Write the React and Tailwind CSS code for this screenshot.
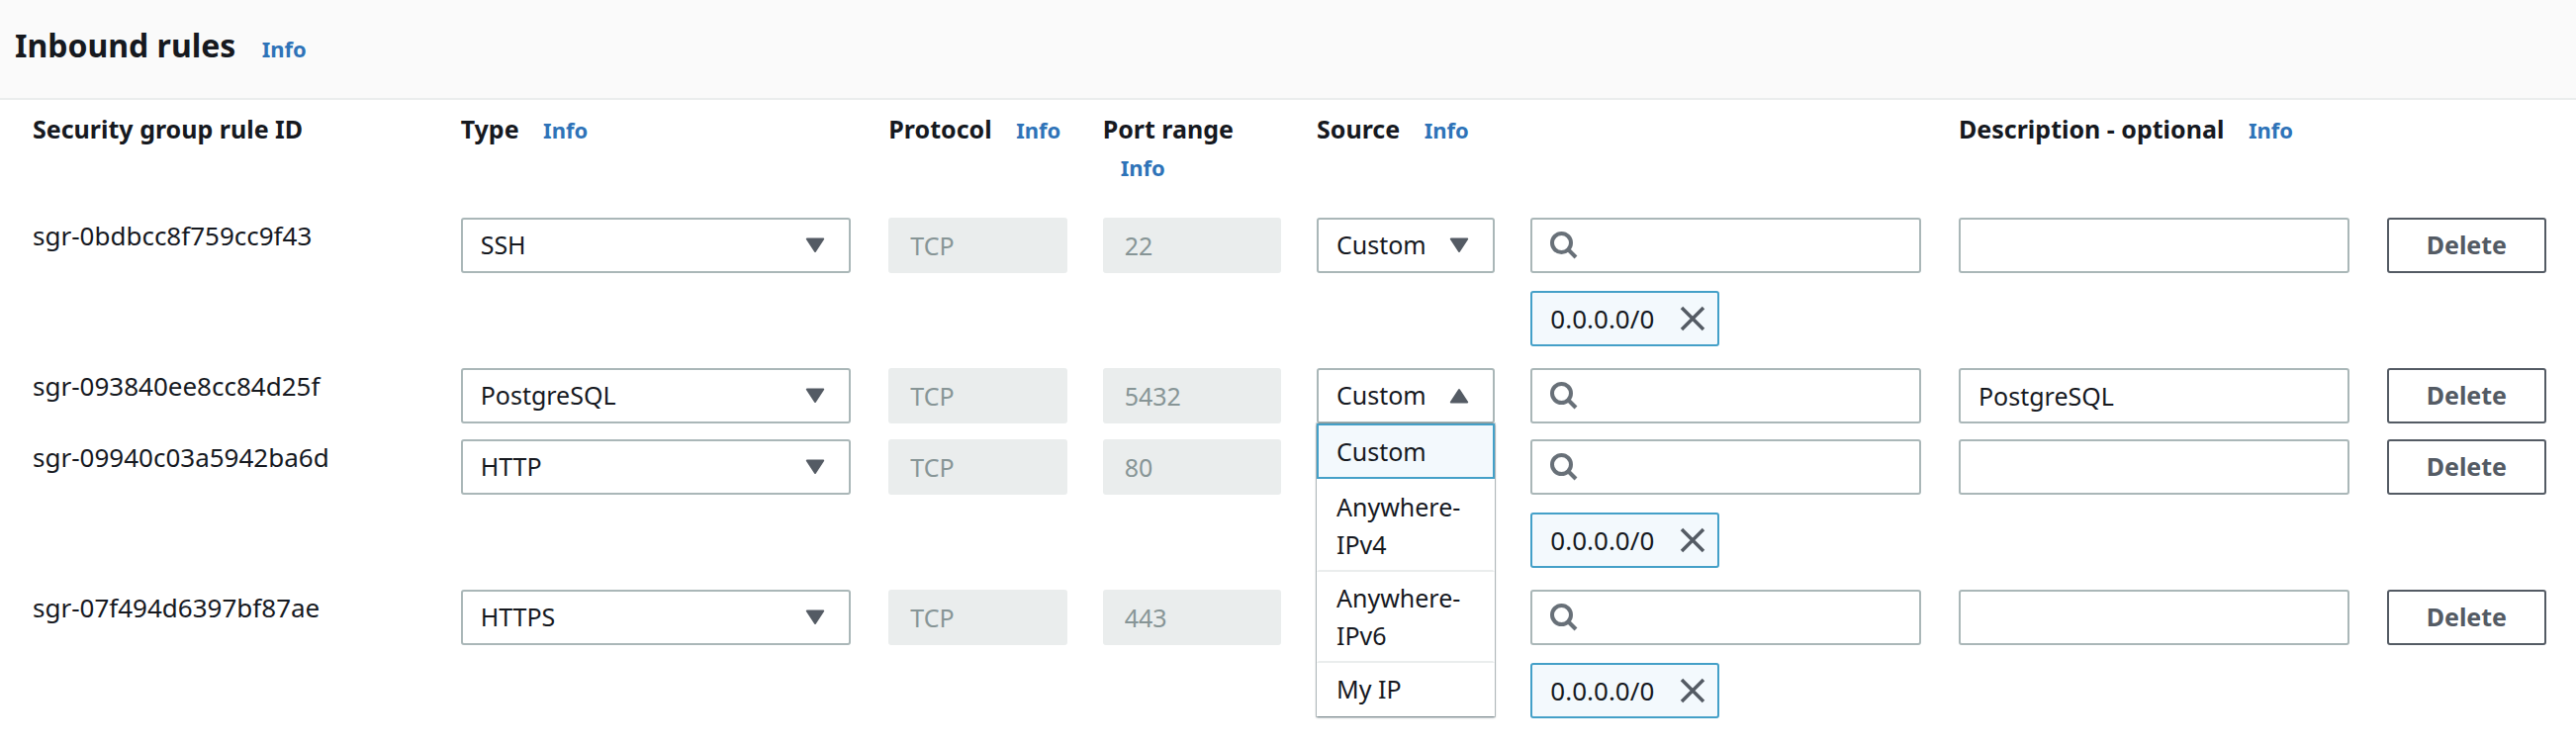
const columns = [
  { label: 'Security group rule ID', span: 'col-span-2', info: false },
  { label: 'Type', span: 'col-span-2', info: true },
  { label: 'Protocol', span: 'col-span-1', info: true },
  { label: 'Port range', span: 'col-span-1', info: true },
  { label: 'Source', span: 'col-span-3', info: true },
  { label: 'Description - optional', span: 'col-span-2', info: true },
];

const rules = [
  { id: 'sgr-0bdbcc8f759cc9f43', type: 'SSH', port: '22', cidr: '0.0.0.0/0', description: '' },
  { id: 'sgr-093840ee8cc84d25f', type: 'PostgreSQL', port: '5432', cidr: null, description: 'PostgreSQL', open: true },
  { id: 'sgr-09940c03a5942ba6d', type: 'HTTP', port: '80', cidr: '0.0.0.0/0', description: '' },
  { id: 'sgr-07f494d6397bf87ae', type: 'HTTPS', port: '443', cidr: '0.0.0.0/0', description: '' },
];

const types = ['SSH', 'PostgreSQL', 'HTTP', 'HTTPS'];
const sources = ['Custom', 'Anywhere-IPv4', 'Anywhere-IPv6', 'My IP'];

const field = 'block h-14 w-full rounded-[3px] border-2 border-[#aab7b8] bg-white';

function InfoLink() {
  return (
    <a href="#info" className="ml-[18px] text-[22px] font-bold text-[#2e73b8]">
      Info
    </a>
  );
}

function Caret({ up }) {
  return (
    <svg viewBox="0 0 20 16" className={up ? 'h-4 w-5 rotate-180' : 'h-4 w-5'} aria-hidden="true">
      <path d="M1.8 1.5h16.4L10 14z" fill="#545b64" stroke="#545b64" strokeWidth="2" strokeLinejoin="round" />
    </svg>
  );
}

function SelectField({ label, value, options }) {
  return (
    <div className="relative">
      <select aria-label={label} defaultValue={value} className={`${field} appearance-none pr-12 pl-[18px]`}>
        {options.map((option) => (
          <option key={option}>{option}</option>
        ))}
      </select>
      <span className="pointer-events-none absolute inset-y-0 right-[26px] flex items-center">
        <Caret />
      </span>
    </div>
  );
}

function OpenSelect({ label, value, options }) {
  return (
    <div className="relative">
      <button
        type="button"
        aria-label={label}
        aria-haspopup="listbox"
        aria-expanded="true"
        className={`${field} flex items-center justify-between pr-6 pl-[18px]`}
      >
        {value}
        <Caret up />
      </button>
      <ul
        role="listbox"
        aria-label={label}
        className="absolute inset-x-0 top-full z-10 bg-white leading-[38px] shadow-[0_1px_2px_rgba(0,28,36,0.6),0_0_0_1px_rgba(0,28,36,0.15)]"
      >
        {options.map((option, i) => (
          <li
            key={option}
            role="option"
            aria-selected={option === value}
            className={
              option === value
                ? 'border-2 border-[#44a0c8] bg-[#f3f9fd] px-[18px] py-[7px]'
                : i === options.length - 1
                  ? '-mt-0.5 border-2 border-transparent px-[18px] py-[7px]'
                  : 'border-2 border-transparent border-b-[#eaeded] px-[18px] py-[7px] nth-3:-mt-0.5'
            }
          >
            {option}
          </li>
        ))}
      </ul>
    </div>
  );
}

function SearchField({ label }) {
  return (
    <div className="relative">
      <input type="search" aria-label={label} className={`${field} pr-4 pl-14`} />
      <svg
        viewBox="0 0 28 28"
        className="pointer-events-none absolute inset-y-0 left-5 my-auto size-7"
        fill="none"
        stroke="#687078"
        strokeWidth="4"
        aria-hidden="true"
      >
        <circle cx="11.5" cy="11.5" r="9.5" />
        <path d="M18 18l8 8" />
      </svg>
    </div>
  );
}

function Token({ value }) {
  return (
    <div className="mt-[18px] mb-1.5 inline-flex h-14 items-center gap-[26px] rounded-[3px] border-2 border-[#44a0c8] bg-[#f3f9fd] pr-3 pl-[18px] text-[26px]">
      <span>{value}</span>
      <button type="button" aria-label={`Remove ${value}`}>
        <svg viewBox="0 0 26 26" className="size-[26px]" stroke="#545b64" strokeWidth="3.5" aria-hidden="true">
          <path d="M2 2l22 22M24 2l-22 22" />
        </svg>
      </button>
    </div>
  );
}

function RuleRow({ rule }) {
  return (
    <tr role="row" className="grid grid-cols-12 gap-x-9">
      <td role="cell" className="col-span-2 text-[26px] leading-9">{rule.id}</td>
      <td role="cell" className="col-span-2 pr-0.5">
        <SelectField label={`Type for ${rule.id}`} value={rule.type} options={types} />
      </td>
      <td role="cell">
        <input
          disabled
          aria-label={`Protocol for ${rule.id}`}
          defaultValue="TCP"
          className="block h-14 w-full rounded-[3px] bg-[#eaeded] px-[22px] text-[#879596]"
        />
      </td>
      <td role="cell">
        <input
          disabled
          aria-label={`Port range for ${rule.id}`}
          defaultValue={rule.port}
          className="block h-14 w-full rounded-[3px] bg-[#eaeded] px-[22px] text-[#879596]"
        />
      </td>
      <td role="cell">
        {rule.open ? (
          <OpenSelect label={`Source for ${rule.id}`} value="Custom" options={sources} />
        ) : (
          <SelectField label={`Source for ${rule.id}`} value="Custom" options={sources} />
        )}
      </td>
      <td role="cell" className="col-span-2 pr-0.5">
        <SearchField label={`Search source for ${rule.id}`} />
        {rule.cidr && <Token value={rule.cidr} />}
      </td>
      <td role="cell" className="col-span-2 pr-0.5">
        <input
          type="text"
          aria-label={`Description for ${rule.id}`}
          defaultValue={rule.description}
          className={`${field} px-[18px]`}
        />
      </td>
      <td role="cell">
        <button type="button" className="h-14 rounded-[3px] border-2 border-[#545b64] bg-white px-[38px] font-bold text-[#545b64]">
          Delete
        </button>
      </td>
    </tr>
  );
}

export default function App() {
  return (
    <main className="min-h-screen bg-white font-['Noto_Sans',sans-serif] text-[25px] text-[#16191f]">
      <header className="border-b-2 border-[#eaeded] bg-[#fafafa] px-[15px] pt-5 pb-6">
        <h2 className="text-[32px] leading-[52px] font-bold">
          Inbound rules <InfoLink />
        </h2>
      </header>
      <table role="table" className="block pr-[11px] pl-[33px]">
        <thead role="rowgroup" className="block">
          <tr role="row" className="grid grid-cols-12 gap-x-9 pt-[10px] pb-8">
            {columns.map((column) => (
              <th key={column.label} role="columnheader" className={`${column.span} text-left leading-[38px] font-bold`}>
                {column.label} {column.info && <InfoLink />}
              </th>
            ))}
          </tr>
        </thead>
        <tbody role="rowgroup" className="flex flex-col gap-4">
          {rules.map((rule) => (
            <RuleRow key={rule.id} rule={rule} />
          ))}
        </tbody>
      </table>
    </main>
  );
}
